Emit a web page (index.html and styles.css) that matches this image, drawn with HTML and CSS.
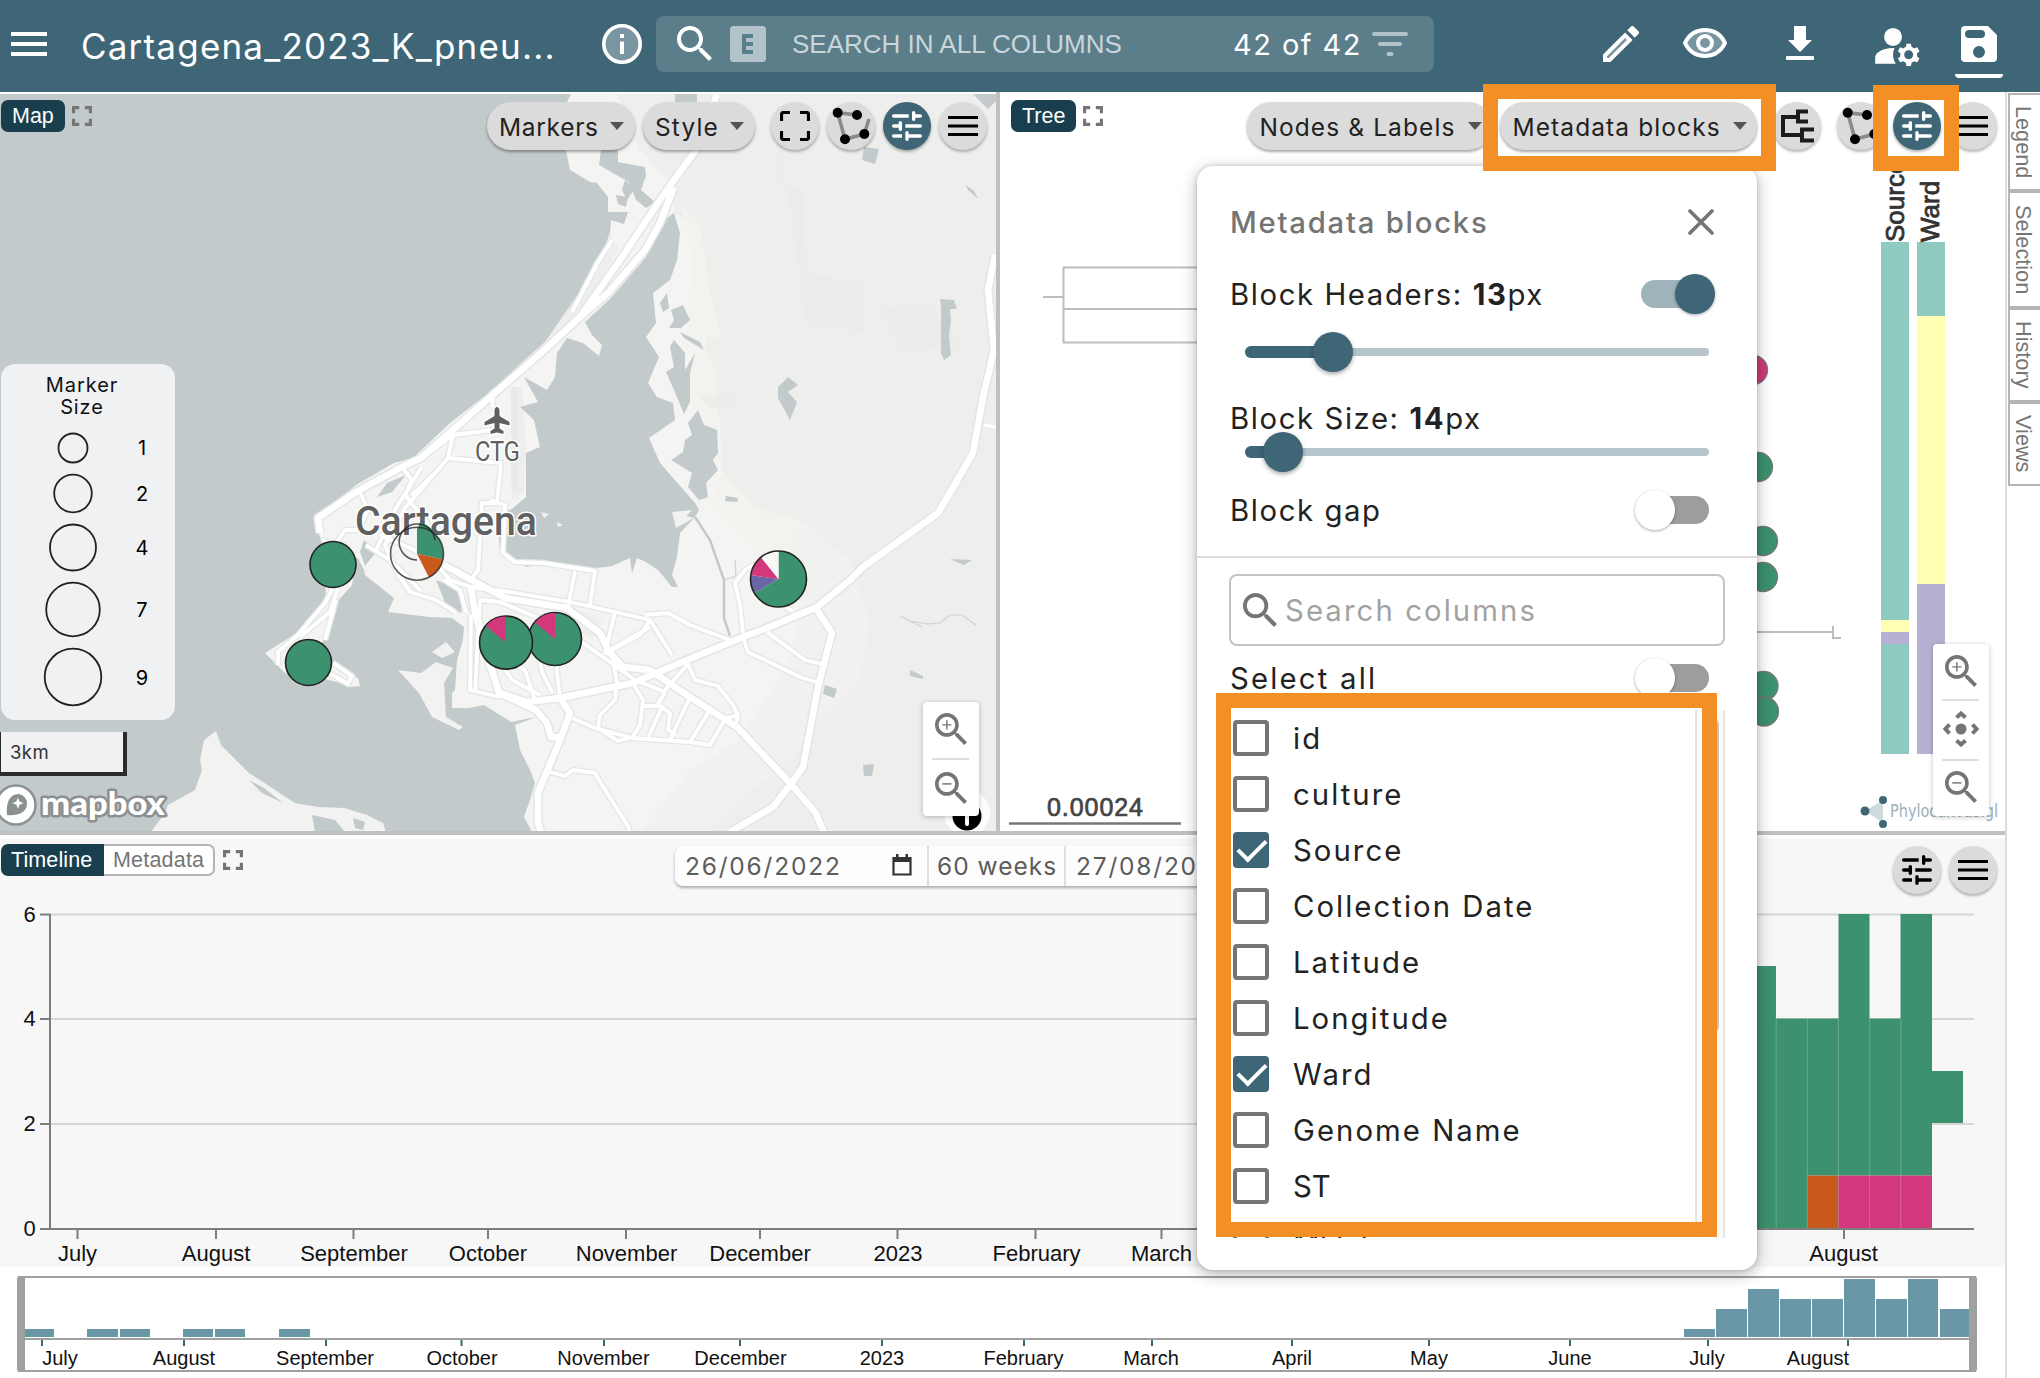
FILE: index.html
```html
<!DOCTYPE html>
<html lang="en">
<head>
<meta charset="utf-8">
<title>Cartagena_2023_K_pneumoniae</title>
<link rel="stylesheet" href="styles.css">
</head>
<body>
<svg class="defs" width="0" height="0">
  <defs>
    <symbol id="i-search" viewBox="3 3 17.5 17.5"><path d="M15.5 14h-.79l-.28-.27C15.41 12.59 16 11.11 16 9.5 16 5.91 13.09 3 9.5 3S3 5.91 3 9.5 5.91 16 9.5 16c1.61 0 3.09-.59 4.23-1.57l.27.28v.79l5 4.99L20.49 19l-4.99-5zm-6 0C7.01 14 5 11.99 5 9.5S7.01 5 9.5 5 14 7.01 14 9.5 11.99 14 9.5 14z"/></symbol>
    <symbol id="i-zoomin" viewBox="3 3 17.5 17.5"><use href="#i-search" x="3" y="3" width="17.5" height="17.5"/><path d="M12 9.900H9.900V12h-.8V9.900H7v-.8h2.100V7h.8v2.100H12z"/></symbol>
    <symbol id="i-zoomout" viewBox="3 3 17.5 17.5"><use href="#i-search" x="3" y="3" width="17.5" height="17.5"/><path d="M7 9.100h5v.8H7z"/></symbol>
    <symbol id="i-tune" viewBox="0 0 24 24"><path d="M3 18c0 .55.45 1 1 1h5v-2H4c-.55 0-1 .45-1 1zM3 6c0 .55.45 1 1 1h9V5H4c-.55 0-1 .45-1 1zm10 14v-1h7c.55 0 1-.45 1-1s-.45-1-1-1h-7v-1c0-.55-.45-1-1-1s-1 .45-1 1v4c0 .55.45 1 1 1s1-.45 1-1zM7 10v1H4c-.55 0-1 .45-1 1s.45 1 1 1h3v1c0 .55.45 1 1 1s1-.45 1-1v-4c0-.55-.45-1-1-1s-1 .45-1 1zm14 2c0-.55-.45-1-1-1h-9v2h9c.55 0 1-.45 1-1zm-5-3c.55 0 1-.45 1-1V7h3c.55 0 1-.45 1-1s-.45-1-1-1h-3V4c0-.55-.45-1-1-1s-1 .45-1 1v4c0 .55.45 1 1 1z"/></symbol>
    <symbol id="i-expand" viewBox="5 5 14 14"><path d="M7.200 14H5v5h5v-2.200H7.200zM5 10h2.200V7.200H10V5H5zm11.800 6.800H14V19h5v-5h-2.200zM14 5v2.200h2.800V10H19V5z"/></symbol>
    <symbol id="i-menu" viewBox="0 0 30 20"><path d="M0 0h30v3H0zM0 8.500h30v3H0zM0 17h30v3H0z"/></symbol>
    <symbol id="i-frame" viewBox="0 0 30 30"><path d="M1.500 10V3.500a2 2 0 0 1 2-2H10M20 1.500h6.500a2 2 0 0 1 2 2V10M28.500 20v6.500a2 2 0 0 1-2 2H20M10 28.500H3.500a2 2 0 0 1-2-2V20" fill="none" stroke="#000" stroke-width="3.200"/></symbol>
    <symbol id="i-poly" viewBox="-24 -24 48 48"><path d="M6-11L-13.300-13.300-6 13.300 13.300 8 18-7" fill="none" stroke="#8a8a8a" stroke-width="3.600"/><circle cx="-13.300" cy="-13.300" r="5"/><circle cx="6" cy="-11" r="5"/><circle cx="13.300" cy="8" r="5"/><circle cx="-6" cy="13.300" r="5"/></symbol>
    <symbol id="i-tree" viewBox="-24 -24 48 48"><path d="M1-9h-15V9H5M11-14.500H1v10h10M17 3.500H5v11h12" fill="none" stroke="#1c1c1c" stroke-width="4"/></symbol>
    <path id="minor" d="M494 390L492 407M426 455L453 435 492 430M453 435L448 458 501 463 497 503 482 503 478 570 471 580M448 458L405 508 385 545 398 575 410 592M421 468L395 510 376 550M360 492L368 510 358 530 345 530 335 545 322 540M402 467L412 480 405 495 425 520 440 545M440 468L412 495M490 500L505 505 503 553 515 562 543 563 595 571 590 605M575 571L567 612M333 588L325 603 298 635 278 652 278 665M338 588L330 612 300 637M336 600L325 640M333 663L352 676 348 684 320 668M366 545L390 560 410 592 436 600 455 612M380 535L410 548 432 560 450 580 471 587M395 565L420 590M444 580L460 590 466 612M471 615L470 690 500 697M480 600L475 693M480 600L500 602 560 627 600 655 635 680 665 692M471 587L510 592 570 602 620 613 650 620 672 655M615 612L605 653 650 627M560 698L555 655 540 660 542 672 552 692M535 700L525 670 500 655M650 620L640 635 608 652M645 615L668 613 690 625 730 640M785 607L793 611M743 633L740 605 735 583 745 570 760 562M743 637L748 652 800 677 816 682M767 632L805 660 822 664M612 655L617 683 615 700 600 715 598 728M633 683L643 700 640 725 632 738M643 706L660 706 670 713 668 730 676 735M690 697L670 740M710 710L690 742M663 705L648 738M665 692L657 706M687 662L695 680 718 686 733 705 738 715 736 724M738 715L726 718 710 745 690 742 632 738 595 728 572 718M598 728L618 741 628 738M550 772L565 776 573 770 595 773 600 782 628 826 630 832M687 665L665 690M500 693L488 665 480 620M502 665L512 680 540 695M612 240L598 262 572 312"/>
    <path id="hw" d="M717 94L696 150 674 180 660 200 618 263 580 317 541 353 496 392 421 458 402 467 356 492 318 518 320 533M674 187L660 223 645 250 608 293 580 317M958 480L938 513 863 567 850 580 817 607 767 628 743 637 687 660 633 683 560 698 527 702 500 693M995 255L988 290 994 350 983 397 973 453 938 513M444 565L505 598 567 608 600 633 610 653 623 667 650 670 690 697 737 727 790 783 815 812 824 832M815 607L832 633 818 687 803 767 790 785 773 807 730 832M471 587L475 613 499 693 536 710 547 723 551 737 563 737M560 698L570 713 560 740 538 793 538 823 541 832"/>
  </defs>
</svg>

<header class="topbar">
  <svg class="burger" viewBox="0 0 36 24"><path d="M0 0h36v4H0zM0 10h36v4H0zM0 20h36v4H0z"/></svg>
  <div class="project">Cartagena_2023_K_pneu...</div>
  <svg class="info" viewBox="0 0 40 40"><circle cx="20" cy="20" r="18.200" fill="#7895a0" stroke="#fff" stroke-width="3.600"/><path d="M18 10h4v4h-4zM18 17.500h4V30h-4z" fill="#fff"/></svg>
  <div class="searchbar">
    <svg class="s-icon"><use href="#i-search"/></svg>
    <svg class="chip" viewBox="0 0 36 36"><rect width="36" height="36" rx="3.500" fill="#b1c3c8"/><path d="M23 10H14v16h9M14 18h9" fill="none" stroke="#5b7e8a" stroke-width="4"/></svg>
    <div class="s-text">SEARCH IN ALL COLUMNS</div>
    <div class="s-count">42 of 42</div>
    <svg class="filter" viewBox="0 0 36 24"><path d="M2 2h32M8 12h20M16.500 22h3" stroke="#b1c3c8" stroke-width="4" stroke-linecap="round"/></svg>
  </div>
  <nav class="tools">
    <svg class="t-pencil" viewBox="3 3 18 18"><path d="M4.500 17.500L14.500 7.500l2 2-10 10h-2z" fill="#7895a0"/><path d="M3 17.250V21h3.750L17.810 9.940l-3.750-3.750L3 17.250zM5.920 19H5v-.920l9.060-9.060.920.920L5.920 19zM20.710 5.630l-2.340-2.340c-.390-.390-1.020-.390-1.410 0l-1.830 1.830 3.750 3.750 1.830-1.830c.390-.390.390-1.020 0-1.410z"/></svg>
    <svg class="t-eye" viewBox="0 0 44 30"><path d="M2 15C6 6.500 13 2 22 2s16 4.500 20 13c-4 8.500-11 13-20 13S6 23.500 2 15z" fill="#7895a0" stroke="#fff" stroke-width="4"/><circle cx="22" cy="15" r="7" fill="#7895a0" stroke="#fff" stroke-width="4"/></svg>
    <svg class="t-down" viewBox="0 0 28 34"><path d="M8 0h12v14h6L14 26 2 14h6zM1.500 30h25a1.500 1.500 0 0 1 0 4h-25a1.500 1.500 0 0 1 0-4z"/></svg>
    <svg class="t-user" viewBox="1.500 4 21 17"><circle cx="10" cy="8" r="4"/><path d="M10.670 13.020c-.220-.010-.440-.020-.670-.020-2.420 0-4.680.670-6.610 1.820-.880.520-1.390 1.500-1.390 2.530V20h9.260c-.790-1.130-1.260-2.510-1.260-4 0-1.070.250-2.070.670-2.980zM20.750 16c0-.220-.030-.420-.060-.630l1.140-1.010-1-1.730-1.450.490c-.320-.270-.680-.480-1.080-.630L18 11h-2l-.300 1.490c-.400.150-.760.360-1.080.630l-1.450-.490-1 1.730 1.140 1.010c-.030.210-.060.410-.060.630s.030.420.060.630l-1.140 1.010 1 1.730 1.450-.490c.320.270.680.480 1.080.630L16 21h2l.300-1.490c.400-.150.760-.360 1.080-.630l1.450.490 1-1.730-1.140-1.010c.030-.210.060-.410.060-.630zM17 18c-1.100 0-2-.900-2-2s.900-2 2-2 2 .900 2 2-.900 2-2 2z"/></svg>
    <div class="t-save"><svg viewBox="0 0 36 36"><path fill-rule="evenodd" d="M4 0h23l9 9v23a4 4 0 0 1-4 4H4a4 4 0 0 1-4-4V4a4 4 0 0 1 4-4zM8 4a4 4 0 0 0 0 8h12a4 4 0 0 0 0-8zM18 20a6 6 0 1 0 0 12 6 6 0 0 0 0-12z"/></svg></div>
  </nav>
</header>

<div class="workspace">
  <main class="panes">
    <div class="upper">
      <section class="map">
        <svg class="map-canvas" viewBox="0 94 996 737">
          <rect y="94" width="996" height="737" fill="#c3cacc"/>
          <path fill="#f4f4f2" d="M571 94L567 102 566 150 570 170 590 182 597 183 608 197 608 212 628 212 624 224 611 220 610 233 601 257 583 287 569 312 545 342 517 367 499 385 450 423 413 458 394 463 356 485 318 517 316 525 321 540 333 564 326 588 325 600 297 633 265 653 285 673 312 676 337 682 349 687 360 686 358 678 333 663 320 647 325 637 336 603 352 585 353 578 344 557 358 558 364 570 365 575 394 598 388 612 429 617 452 618 464 627 463 640 457 660 455 690 452 693 452 708 469 708 484 705 511 722 536 717 515 725 520 750 530 770 535 783 530 800 524 817 532 832H996V94z"/>
          <path fill="#f1f1ef" d="M730 470L760 530 800 600 790 660 740 740 690 770 640 832H996V470z"/>
          <path fill="#eeeeec" d="M618 94L640 150 674 187 674 213 700 228 708 290 705 380 720 420 722 470 740 500 800 520 850 560 870 620 860 680 822 720 790 760 740 800 710 832H996V94zM610 233L601 257 583 287 545 342 517 367 540 353 590 300 618 250z"/>
          <path fill="#f2f2ee" d="M681 205L700 225 710 290 722 338 700 338 716 370 716 430 722 470 760 515 800 520 790 560 770 575 740 530 712 505 722 470 704 420 690 402 692 350 685 320 692 280 690 240z"/>
          <path fill="#ebebe9" d="M700 397l30-4 4 10-25 6zM510 387h12l4 60-2 45-12 8zM580 610l22 8-8 20-25-12zM780 140l-2 44 26 6 2 84 60 8v50l-60-6zM880 310l50-8 30 44-60 6z" opacity=".7"/>
          <!-- lagoon -->
          <path fill="#c3cacc" d="M674 213L680 233 677 260 670 280 653 293 656 323 646 337 659 357 648 383 657 397 673 403 675 420 649 438 660 463 695 503 699 510 695 517 680 533 677 557 672 575 678 587 672 587 658 570 646 562 637 558 632 573 630 558 612 566 597 568 567 568 543 563 527 567 507 558 500 550 497 517 513 508 526 497 526 453 540 447 534 420 520 407 538 402 524 377 547 390 555 377 557 353 567 338 583 343 599 356 602 345 592 335 585 322 611 298 646 257 660 223z"/>
          <path fill="#c3cacc" d="M601 150H618V162L645 167 646 176 641 190 655 202 646 208 636 200 629 182 611 172 599 165zM671 310L683 305 690 320 681 328 669 328 674 320zM660 303l7-10 2 15-6 4zM674 340L685 353 685 370 695 353 690 373 690 402 684 414 671 383 666 372 674 367 670 347zM698 410L704 425 717 430 718 453 713 460 718 470 706 483 708 497 699 500 688 487 692 473 671 460 683 452 685 440 692 435 688 423zM788 377L798 385 788 392 797 402 790 420 778 398 778 387zM940 299L954 300 957 309 950 309 951 320 949 335 951 355 944 360 941 353 941 308zM864 147L879 149 875 164 862 160zM973 94H996V101L988 109zM675 94h22v8h-22zM726 496l12 2-1 4-12-1zM825 685l12 4-3 9-11-4zM910 670l13 6v3l-13-3zM863 765l11-1-2 12h-8zM616 195l12 2-2 10-8-3zM680 332l20 10 4 8-20-12zM625 180l10 8-8 12-5-10zM966 185l8 6 4 8-10-9zM377 497L387 483 406 475 392 492zM364 540l12 12-11 14-5-14zM436 580L455 587 463 600 461 613 446 605zM950 559l22 1-8 5z"/>
          <path fill="#f2f2f0" d="M151 832L165 813 168 805 195 790 202 770 200 760 204 740 216 731 221 745 233 757 249 773 295 803 318 807 344 808 367 815 383 823 386 832zM398 670L421 673 436 662 453 668 444 683 446 717 463 727 459 730 432 717 419 693zM432 652L446 642 455 652 442 658zM541 512l8 2-5 4zM557 522l6 3-5 2zM672 512l20-2-6 6 8 2-18 10z"/>
          <path fill="#c3cacc" d="M249 780L264 788 283 803 262 793zM312 815L335 820 345 832H315zM353 818l12 4-2 8-8-2z"/>
          <path d="M695 517L710 540 724 580V618L730 636" fill="none" stroke="#c3cacc" stroke-width="2.500"/>
          <path d="M900 616l10 5 18 3 12-1 10-8 12 0 14 10M910 621l12 6M735 560l1 16-12 4" fill="none" stroke="#ccd2d4" stroke-width="1.200"/>
          <path d="M515 387V492" stroke="#e8e9e9" stroke-width="7"/>
          <g fill="none" stroke-linejoin="round">
            <use href="#minor" stroke="#e3e8e7" stroke-width="6.500"/>
            <use href="#hw" stroke="#e2e6e5" stroke-width="9.500"/>
            <use href="#minor" stroke="#fff" stroke-width="3.800"/>
            <use href="#hw" stroke="#fff" stroke-width="6.500"/>
            <path d="M984 425l12 2" stroke="#fff" stroke-width="3"/>
          </g>
          <g class="place">
            <path d="M497 407c1.600 0 2.500 2 2.500 4v5l10 6v3.500l-10-2.500v5.500l4 2.500v3l-6.500-1.500-6.500 1.500v-3l4-2.500v-5.500l-10 2.500v-3.500l10-6v-5c0-2 .900-4 2.500-4z"/>
            <text x="475" y="461" font-size="27" textLength="45" lengthAdjust="spacingAndGlyphs">CTG</text>
            <text class="city" x="355" y="535" font-size="40" textLength="182" lengthAdjust="spacingAndGlyphs">Cartagena</text>
          </g>
          <g stroke="#222" stroke-width="1.600">
            <circle cx="333" cy="564.500" r="23" fill="#3c916e"/><circle cx="308.500" cy="662.500" r="23" fill="#3c916e"/>
            <path d="M419 523a18 18 0 0 1 17 18l-19 0z" fill="#3c916e" stroke="none"/>
            <path d="M417 553.700V527.200A26.500 26.500 0 0 1 443 559.500z" fill="#3c916e" stroke="none"/>
            <path d="M417 553.700L443 559.500A26.500 26.500 0 0 1 429 577.400z" fill="#c6591b" stroke="none"/>
            <circle cx="417" cy="553.700" r="26.500" fill="none" stroke-opacity=".75"/><path d="M417 560a18 18 0 1 1 18-20" fill="none" stroke-opacity=".75"/>
            <circle cx="555" cy="639" r="26.500" fill="#3c916e"/><path d="M555 639L534.900 622.400A26 26 0 0 1 555 613z" fill="#d4387c" stroke="none"/>
            <circle cx="506" cy="642.600" r="26.500" fill="#3c916e"/><path d="M506 642.600L485.900 626A26 26 0 0 1 506 616.600z" fill="#d4387c" stroke="none"/>
            <path d="M778.500 579V551A28 28 0 1 1 754.300 593z" fill="#3c916e" stroke="none"/>
            <path d="M778.500 579L754.300 593A28 28 0 0 1 750.700 575z" fill="#6a66a6" stroke="none"/>
            <path d="M778.500 579L750.700 575A28 28 0 0 1 761 557.300z" fill="#d4387c" stroke="none"/>
            <path d="M778.500 579L761 557.300A28 28 0 0 1 778.500 551z" fill="#f7f7f5" stroke="none"/>
            <circle cx="778.500" cy="579" r="28" fill="none"/>
          </g>
          <g class="mapbox">
            <circle cx="16" cy="805" r="19.500" fill="#fff" stroke="#8b9192" stroke-width="2.500"/>
            <path d="M7 815c-1-12 2-21 12-21a9.500 9.500 0 0 1 8 10c0 9-10 12-20 11z" fill="#8b9192"/><path d="M18 797.500l1.600 4 4 1.600-4 1.600-1.600 4-1.600-4-4-1.600 4-1.600z" fill="#fff"/>
            <text x="41" y="815" font-size="33" textLength="124" lengthAdjust="spacingAndGlyphs">mapbox</text>
          </g>
          <circle cx="967" cy="813" r="23" fill="#fff" opacity=".85"/><circle cx="967" cy="816" r="14.500"/><path d="M967 807v17" stroke="#fff" stroke-width="4" stroke-linecap="round"/>
        </svg>
        <div class="pane-bar map-bar">
          <span class="tag">Map</span><svg class="expand"><use href="#i-expand"/></svg>
          <button class="pill p-markers"><b>Markers</b><i></i></button>
          <button class="pill p-style"><b>Style</b><i></i></button>
          <span class="round r1"><svg class="ic30"><use href="#i-frame"/></svg></span>
          <span class="round"><svg class="ic48"><use href="#i-poly"/></svg></span>
          <span class="round on"><svg class="ic40"><use href="#i-tune"/></svg></span>
          <span class="round"><svg class="icm"><use href="#i-menu"/></svg></span>
        </div>
        <div class="sizes">
          <h4>Marker<br>Size</h4>
          <svg viewBox="0 416 174 304">
            <g fill="none" stroke="#222" stroke-width="1.800"><circle cx="72" cy="448" r="14.500"/><circle cx="72" cy="493.500" r="18.800"/><circle cx="72" cy="547.500" r="23"/><circle cx="72" cy="609.500" r="26.800"/><circle cx="72" cy="677" r="28.300"/></g>
            <g font-size="20" text-anchor="middle"><text x="141" y="455">1</text><text x="141" y="501">2</text><text x="141" y="555">4</text><text x="141" y="617">7</text><text x="141" y="685">9</text></g>
          </svg>
        </div>
        <div class="km">3km</div>
        <div class="zoomer map-zoom"><svg><use href="#i-zoomin"/></svg><hr><svg><use href="#i-zoomout"/></svg></div>
      </section>

      <section class="tree">
        <svg class="tree-canvas" viewBox="1000 92 1005 739">
          <g fill="none" stroke="#bdbdbd" stroke-width="2"><path d="M1043 297h20M1200 267.500H1063.500V342.500H1200M1063 309H1200M1757 632h76M1833 626v12h8"/></g>
          <g stroke="#777" stroke-width="1.300"><circle cx="1753" cy="370" r="14.500" fill="#d4387c"/><g fill="#3c916e"><circle cx="1758" cy="467" r="14.500"/><circle cx="1763" cy="541" r="14.500"/><circle cx="1763" cy="577" r="14.500"/><circle cx="1763.500" cy="686" r="14.500"/><circle cx="1764" cy="711.500" r="14.500"/></g></g>
          <g fill="#8ecac0"><path d="M1881 242h28v512h-28zM1917 242h28v74h-28z"/></g>
          <path fill="#ffffb3" d="M1881 620h28v12h-28zM1917 316h28v268h-28z"/><path fill="#b6b0d3" d="M1881 632h28v12h-28zM1917 584h28v170h-28z"/>
          <g class="blk"><text transform="translate(1904 242) rotate(-90)">Source</text><text transform="translate(1939 242) rotate(-90)">Ward</text></g>
          <text x="1047" y="816" font-size="25" fill="#444" stroke="#444" stroke-width=".7" textLength="96">0.00024</text><path d="M1009 823.500h172" stroke="#777" stroke-width="2.500"/>
          <g fill="#3e6676"><path d="M1865 811l18-11v23z" fill="#d0dade"/><circle cx="1865" cy="811" r="4.500"/><circle cx="1883" cy="800" r="4"/><circle cx="1883" cy="824" r="4"/></g>
          <text class="phylo" x="1890" y="817" textLength="108" lengthAdjust="spacingAndGlyphs">Phylocanvas.gl</text>
        </svg>
        <div class="pane-bar tree-bar">
          <span class="tag">Tree</span><svg class="expand"><use href="#i-expand"/></svg>
          <button class="pill p-nodes"><b>Nodes &amp; Labels</b><i></i></button>
          <button class="pill p-meta"><b>Metadata blocks</b><i></i></button>
          <span class="round r2"><svg class="ic48"><use href="#i-tree"/></svg></span>
          <span class="round r3"><svg class="ic48"><use href="#i-poly"/></svg></span>
          <span class="round on"><svg class="ic40"><use href="#i-tune"/></svg></span>
          <span class="round"><svg class="icm"><use href="#i-menu"/></svg></span>
        </div>
        <div class="zoomer tree-zoom"><svg><use href="#i-zoomin"/></svg><hr><svg viewBox="0 0 36 36"><circle cx="18" cy="18" r="5.500"/><path d="M13.500 6.500L18 2.500l4.500 4M13.500 29.500l4.500 4 4.500-4M6.500 13.500L2.500 18l4 4.500M29.500 13.500l4 4.500-4 4.500" fill="none" stroke="#757575" stroke-width="4"/></svg><hr><svg><use href="#i-zoomout"/></svg></div>
      </section>
    </div>

    <section class="timeline">
      <svg class="time-canvas" viewBox="0 838 2005 540">
        <rect y="838" width="2005" height="429" fill="#f7f7f7"/>
        <path d="M50 914.500H1974M50 1019H1974M50 1124H1974" stroke="#d6d6d6" stroke-width="2"/>
        <path fill="#3c916e" d="M1740 966h36v52.500h62.500V914h31v104.500h31V914H1932v314.500H1740zM1932 1071h31v52h-31z"/>
        <path fill="#c6591b" d="M1807 1175.500h31.300v52.500H1807z"/><path fill="#d4387c" d="M1838.300 1175.500H1932v52.500h-93.700z"/>
        <path d="M1776.200 1018v210M1807.300 1018v210M1838.400 1018v210M1869.700 1018v210M1900.800 1018v210M1807 1175.500h125" stroke="#fff" stroke-opacity=".22" fill="none"/>
        <path d="M50 914V1229M40 914.500h10M40 1019h10M40 1124h10M77.500 1230v9M216 1230v9M353.500 1230v9M488 1230v9M626 1230v9M760 1230v9M897.500 1230v9M1035.500 1230v9M1161.500 1230v9M1844 1230v9" stroke="#7d7d7d" stroke-width="2"/><path d="M40 1229H1974" stroke="#7d7d7d" stroke-width="2"/>
        <g class="ax" font-size="22"><text x="29.500" y="922">6</text><text x="29.500" y="1026">4</text><text x="29.500" y="1131">2</text><text x="29.500" y="1236">0</text>
        <text x="77.500" y="1261">July</text><text x="216" y="1261">August</text><text x="354" y="1261">September</text><text x="488" y="1261">October</text><text x="626.500" y="1261">November</text><text x="760" y="1261">December</text><text x="898" y="1261">2023</text><text x="1036.500" y="1261">February</text><text x="1161.500" y="1261">March</text><text x="1843.500" y="1261">August</text></g>
        <path fill="#6a97a8" d="M25 1329h29v8H25zM87 1329h31v8h-31zM120 1329h30v8h-30zM183 1329h30v8h-30zM215 1329h30v8h-30zM279 1329h31v8h-31zM1684 1329h31v8h-31zM1716 1309h31v28h-31zM1748 1289h31v48h-31zM1780 1299h31v38h-31zM1812 1299h31v38h-31zM1844 1279h31v58h-31zM1876 1299h31v38h-31zM1908 1279h30v58h-30zM1940 1309h30v28h-30z"/>
        <path d="M25 1339H1970" stroke="#808080" stroke-width="1.500"/>
        <path d="M42 1340v6M184 1340v6M326 1340v6M461.500 1340v6M604 1340v6M740 1340v6M882 1340v6M1024 1340v6M1152 1340v6M1292 1340v6M1429 1340v6M1570 1340v6M1708 1340v6M1848 1340v6" stroke="#3e6676" stroke-width="2"/>
        <g class="ax" font-size="20"><text x="60" y="1365">July</text><text x="184" y="1365">August</text><text x="325" y="1365">September</text><text x="462" y="1365">October</text><text x="603.500" y="1365">November</text><text x="740.500" y="1365">December</text><text x="882" y="1365">2023</text><text x="1023.500" y="1365">February</text><text x="1151" y="1365">March</text><text x="1292" y="1365">April</text><text x="1429" y="1365">May</text><text x="1570" y="1365">June</text><text x="1707" y="1365">July</text><text x="1818" y="1365">August</text></g>
        <path d="M18 1277H1976M18 1371H1976" stroke="#a0a0a0" stroke-width="2"/><rect x="17" y="1276" width="8" height="96" rx="3" fill="#a0a0a0"/><rect x="1969" y="1276" width="8" height="96" rx="3" fill="#a0a0a0"/>
      </svg>
      <div class="time-bar">
        <span class="tag t1">Timeline</span><span class="tag t2">Metadata</span><svg class="expand"><use href="#i-expand"/></svg>
        <div class="dates">
          <span class="d1"><b>26/06/2022</b><svg viewBox="0 0 20 22"><path d="M1.500 4h17v16.500h-17z" fill="none" stroke="#333" stroke-width="2.200"/><path d="M1 3h18v5H1zM4 0h2.500v4H4zM13.500 0H16v4h-2.500z" fill="#333"/></svg></span>
          <span class="d2"><b>60 weeks</b></span>
          <span class="d3"><b>27/08/2023</b></span>
        </div>
        <span class="round r4"><svg class="ic40"><use href="#i-tune"/></svg></span>
        <span class="round"><svg class="icm"><use href="#i-menu"/></svg></span>
      </div>
    </section>
  </main>
  <aside class="side">
    <div class="s1">Legend</div><div class="s2">Selection</div><div class="s3">History</div><div class="s4">Views</div>
  </aside>
</div>

<div class="popover">
  <div class="row title"><b>Metadata blocks</b><svg class="close" viewBox="0 0 26 26"><path d="M2 2l22 22M24 2L2 24" stroke="#757575" stroke-width="3.600" stroke-linecap="round"/></svg></div>
  <div class="row headers"><span>Block Headers: <strong>13</strong>px</span><span class="toggle checked"></span></div>
  <div class="slider v13"><i></i></div>
  <div class="row size"><span>Block Size: <strong>14</strong>px</span></div>
  <div class="slider v14"><i></i></div>
  <div class="row gap"><span>Block gap</span><span class="toggle"></span></div>
  <div class="rule"></div>
  <div class="find"><svg><use href="#i-search"/></svg><span>Search columns</span></div>
  <div class="row all"><span>Select all</span><span class="toggle"></span></div>
  <div class="list">
    <ul>
      <li><i></i><span>id</span></li>
      <li><i></i><span>culture</span></li>
      <li class="ck"><i></i><span>Source</span></li>
      <li><i></i><span>Collection Date</span></li>
      <li><i></i><span>Latitude</span></li>
      <li><i></i><span>Longitude</span></li>
      <li class="ck"><i></i><span>Ward</span></li>
      <li><i></i><span>Genome Name</span></li>
      <li class="st"><i></i><span>ST</span></li>
      <li class="st"><i></i><span>MLST</span></li>
    </ul>
    <div class="scroll"><i></i></div>
  </div>
</div>

<div class="mark m1"></div><div class="mark m2"></div><div class="mark m3"></div>
</body>
</html>
```
FILE: styles.css
```css
* { box-sizing: border-box; }
body { margin: 0; width: 2040px; height: 1378px; overflow: hidden; position: relative; background: #fff; font-family: Inter, "Liberation Sans", sans-serif; color: #222; display: flex; flex-direction: column; }
svg { display: block; flex: none; }
.defs { position: absolute; }
b { font-weight: 400; white-space: nowrap; }

.topbar { height: 92px; flex: none; background: #3e6676; display: flex; align-items: flex-start; color: #fff; fill: #fff; }
.burger { width: 36px; height: 24px; margin: 32px 0 0 11px; }
.project { width: 521px; margin-left: 34px; line-height: 92px; font-size: 35px; white-space: nowrap; letter-spacing: 1.200px; }
.info { width: 40px; height: 40px; margin-top: 24px; }
.searchbar { width: 778px; height: 56px; margin: 16px 0 0 14px; border-radius: 8px; background: #5b7e8a; display: flex; }
.s-icon { width: 35px; height: 35px; margin: 10px 0 0 21px; }
.chip { width: 36px; height: 36px; margin: 10px 0 0 18px; }
.s-text { width: 441px; margin-left: 26px; font: 26px/56px "Liberation Sans", sans-serif; color: #c9d6da; white-space: nowrap; }
.s-count { width: 139px; line-height: 57px; font-size: 29px; white-space: nowrap; letter-spacing: 1.450px; }
.filter { width: 36px; height: 24px; margin-top: 16px; fill: none; }
.tools { margin-left: 169px; display: flex; align-items: flex-start; }
.t-pencil { width: 36px; height: 36px; margin-top: 26px; }
.t-eye { width: 44px; height: 30px; margin: 28px 0 0 44px; }
.t-down { width: 28px; height: 34px; margin: 26px 0 0 59px; }
.t-user { width: 47px; height: 38px; margin: 28px 0 0 60px; }
.t-save { margin: 26px 0 0 40px; position: relative; }
.t-save svg { width: 36px; height: 36px; }
.t-save::after { content: ""; position: absolute; left: -6px; top: 48px; width: 48px; height: 4px; background: #fff; border-radius: 0 0 4px 4px; }

.workspace { flex: 1; display: flex; min-height: 0; }
.panes { width: 2005px; flex: none; }
.upper { height: 743px; display: flex; border-bottom: 4px solid #c0c0c0; }
.map { width: 1000px; flex: none; border-right: 4px solid #c0c0c0; padding-top: 2px; position: relative; }
.map-canvas { position: absolute; left: 0; top: 2px; width: 996px; height: 737px; }
.tree { flex: 1; position: relative; }
.tree-canvas { position: absolute; left: 0; top: 0; width: 1005px; height: 739px; font-family: "Liberation Sans", Arial, sans-serif; }
.place { font-family: Roboto, sans-serif; fill: #606060; stroke: #fff; stroke-width: 3px; paint-order: stroke; stroke-linejoin: round; }
.city { font-weight: 500; }
.mapbox text { font-family: Lato, sans-serif; font-weight: 900; fill: #fff; stroke: #8b9192; stroke-width: 5px; paint-order: stroke; stroke-linejoin: round; }
.blk { font-size: 26px; fill: #333; stroke: #333; stroke-width: .8px; }
.phylo { font: 17px "DejaVu Sans", sans-serif; fill: #9ab0ba; }
.ax { font-family: "Liberation Sans", Arial, sans-serif; text-anchor: middle; fill: #111; }

.pane-bar { position: relative; display: flex; align-items: flex-start; height: 60px; }
.map-bar { padding: 6px 0 0 1px; }
.tree-bar { padding: 8px 0 0 11px; }
.tag { height: 32px; padding: 0 11px; border-radius: 7px; background: #193e4d; color: #fff; font: 21.500px/33px "Liberation Sans", sans-serif; }
.expand { width: 20px; height: 20px; margin: 6px 0 0 7px; fill: #757575; }
.pill { height: 48px; margin: 2px 0 0; padding: 0 10px 0 12px; border: 0; border-radius: 24px; background: #dbdbdb; box-shadow: 0 2px 3px rgba(0,0,0,.35); font: 24.500px/48px Inter, sans-serif; letter-spacing: 1.100px; color: #222; display: flex; justify-content: space-between; align-items: center; flex: none; }
.pill b { padding-top: 1px; }
.pill i { border: 7.500px solid transparent; border-top: 8px solid #555; border-bottom: 0; }
.p-markers { width: 148px; margin-left: auto; padding-right: 11px; letter-spacing: .7px; }
.p-style { width: 112px; margin-left: 8px; padding-right: 11px; }
.round { width: 48px; height: 48px; margin: 2px 8px 0 0; border-radius: 50%; background: #dbdbdb; box-shadow: 0 2px 3px rgba(0,0,0,.3); display: flex; align-items: center; justify-content: center; flex: none; }
.round.on { background: #3e6676; fill: #fff; }
.r1 { margin-left: 16px; }
.ic30 { width: 30px; height: 30px; } .ic40 { width: 40px; height: 40px; } .ic48 { width: 48px; height: 48px; }
.icm { width: 30px; height: 20px; }
.map-bar .round:last-child { margin-right: 9px; }
.p-nodes { width: 245px; margin-left: 144px; }
.p-meta { width: 257px; margin-left: 8px; }
.r2 { margin: 2px 16px 0; }

.sizes { position: absolute; left: 1px; top: 272px; width: 174px; height: 356px; border-radius: 14px; background: #f0f1f3; color: #111; }
.sizes h4 { margin: 0; padding: 10px 12px 0 0; height: 52px; font-size: 20px; font-weight: 400; line-height: 22px; text-align: center; letter-spacing: .9px; }
.sizes svg { width: 174px; height: 304px; }
.km { position: absolute; left: 0; top: 640px; width: 127px; height: 44px; padding-left: 9px; border: solid #2b2b2b; border-width: 0 4px 4px 1px; background: #f0f1f3; font-size: 18.500px; line-height: 41px; color: #333; letter-spacing: .4px; }
.zoomer { position: absolute; width: 56px; padding: 11px 10px 0 9px; border-radius: 4px; background: #fff; box-shadow: 0 1px 5px rgba(0,0,0,.25); fill: #757575; display: flex; flex-direction: column; align-items: center; }
.zoomer svg { width: 32px; height: 32px; }
.zoomer hr { width: 37px; height: 2px; border: 0; background: #dedede; margin: 13px 0 12px; }
.map-zoom { left: 923px; top: 610px; height: 114px; }
.tree-zoom { left: 933px; top: 552px; height: 172px; }
.tree-zoom svg:nth-of-type(2) { width: 36px; height: 36px; }
.tree-zoom hr { margin: 12px 0 10px; }

.timeline { position: relative; margin-top: 3px; height: 540px; }
.time-canvas { position: absolute; left: 0; top: 0; width: 2005px; height: 540px; }
.time-bar { position: relative; display: flex; padding: 6px 0 0 1px; }
.t1 { width: 103px; padding: 0 0 0 10px; border-radius: 7px 0 0 7px; letter-spacing: .1px; }
.t2 { width: 111px; padding: 0 0 0 9px; border: 2px solid #b5b5b5; border-left: 0; border-radius: 0 7px 7px 0; background: #fff; color: #757575; line-height: 29px; letter-spacing: .2px; }
.time-bar .expand { margin-left: 8px; }
.dates { height: 40px; margin: 2px 0 0 432px; display: flex; background: #fdfdfd; border-radius: 8px; box-shadow: 0 2px 3px rgba(0,0,0,.3); font-size: 24.500px; line-height: 40px; letter-spacing: 1.800px; color: #5c5c5c; }
.dates span { display: flex; padding-left: 10px; }
.d1 { width: 252px; }
.d1 svg { width: 20px; height: 22px; margin: 8px 0 0 auto; margin-right: 15px; }
.d2 { width: 139px; border: solid #e0e0e0; border-width: 0 2px; letter-spacing: 1px; }
.dates .d2 { padding-left: 8px; }
.d3 { width: 250px; }
.r4 { margin-left: auto; }
.time-bar .round { margin-top: 2px; }
.time-bar .round:last-child { margin-right: 8px; }

.side { flex: 1; border-left: 2px solid #dcdcdc; padding: 1px 0 0 1px; }
.side div { border: solid #b5b5b5; border-width: 2px 0 2px 2px; writing-mode: vertical-rl; width: 32px; line-height: 34px; font-family: "Liberation Sans", sans-serif; font-size: 21.700px; color: #757575; text-align: center; }
.s1 { height: 98px; } .s2 { height: 117px; } .s3 { height: 94px; } .s4 { height: 84px; }

.popover { position: absolute; left: 1197px; top: 166px; width: 560px; height: 1104px; padding: 28px 32px 0 32px; background: #fff; border-radius: 16px; box-shadow: 0 4px 16px rgba(0,0,0,.3), 0 0 4px rgba(0,0,0,.15); font-size: 29.300px; letter-spacing: 1.600px; display: flex; flex-direction: column; }
.row { height: 56px; flex: none; display: flex; align-items: center; justify-content: space-between; white-space: nowrap; }
.row > span:first-child, .title b { margin-left: 1px; }
.title { color: #757575; letter-spacing: 1.750px; } .title b { font-weight: 500; }
.close { width: 26px; height: 26px; margin-right: 11px; }
.headers { height: 88px; }
.toggle { width: 60px; height: 28px; margin-right: 16px; border-radius: 14px; background: #9d9d9d; position: relative; }
.toggle::after { content: ""; position: absolute; left: -14px; top: -6px; width: 40px; height: 40px; border-radius: 50%; background: #fff; box-shadow: 0 1px 3px rgba(0,0,0,.35); }
.toggle.checked { background: #9fb3bb; width: 62px; margin-right: 22px; }
.toggle.checked::after { left: 34px; background: #3e6676; }
.slider { position: relative; height: 40px; flex: none; margin: -6px 16px 0; display: flex; align-items: center; }
.slider::before { content: ""; flex: 1; height: 8px; border-radius: 4px; background: #b6c4cb; }
.slider::after { content: ""; position: absolute; left: 0; height: 12px; border-radius: 6px; background: #3e6676; }
.slider i { position: absolute; z-index: 1; width: 40px; height: 40px; border-radius: 50%; background: #3e6676; box-shadow: 0 2px 4px rgba(0,0,0,.35); }
.v13 i { left: 68px; } .v13::after { width: 80px; }
.v14 i { left: 18px; } .v14::after { width: 30px; }
.size { height: 52px; margin-top: 20px; }
.v14 { margin-top: -12px; }
.gap { margin-top: 10px; }
.rule { height: 2px; flex: none; margin: 18px -32px 0; background: #dcdcdc; }
.find { height: 72px; flex: none; margin: 16px 0 0; border: 2px solid #c4c4c4; border-radius: 8px; display: flex; align-items: center; color: #a2a2a2; letter-spacing: 2.100px; }
.find svg { width: 34px; height: 34px; margin: -1px 8px 0 12px; fill: #757575; }
.all { margin-top: 4px; letter-spacing: 2.200px; }
.list { height: 528px; margin-top: 4px; overflow: hidden; display: flex; flex: none; letter-spacing: 2.050px; }
.list ul { flex: 1; margin: 0; padding: 0; list-style: none; }
.list li { height: 56px; display: flex; align-items: center; }
.list li i { width: 36px; height: 36px; margin: 0 24px 0 4px; border: 4px solid #757575; border-radius: 4px; position: relative; }
.list .ck i { background: #3e6676; border-color: #3e6676; }
.list .st { letter-spacing: 0; }
.ck i::after { content: ""; position: absolute; left: 7px; top: -3px; width: 12px; height: 24px; border: solid #fff; border-width: 0 4px 4px 0; transform: rotate(45deg); }
.scroll { width: 30px; border: solid #e4e4e4; border-width: 0 2px; background: #fafafa; padding: 8px 4px 0 0; }
.scroll i { display: block; margin-left: auto; width: 14px; height: 315px; border-radius: 7px; background: #c1c1c1; }

.mark { position: absolute; border: 15px solid #f48f25; }
.m1 { left: 1483px; top: 84px; width: 293px; height: 87px; }
.m2 { left: 1873px; top: 85px; width: 86px; height: 86px; }
.m3 { left: 1216px; top: 693px; width: 501px; height: 544px; }
```
